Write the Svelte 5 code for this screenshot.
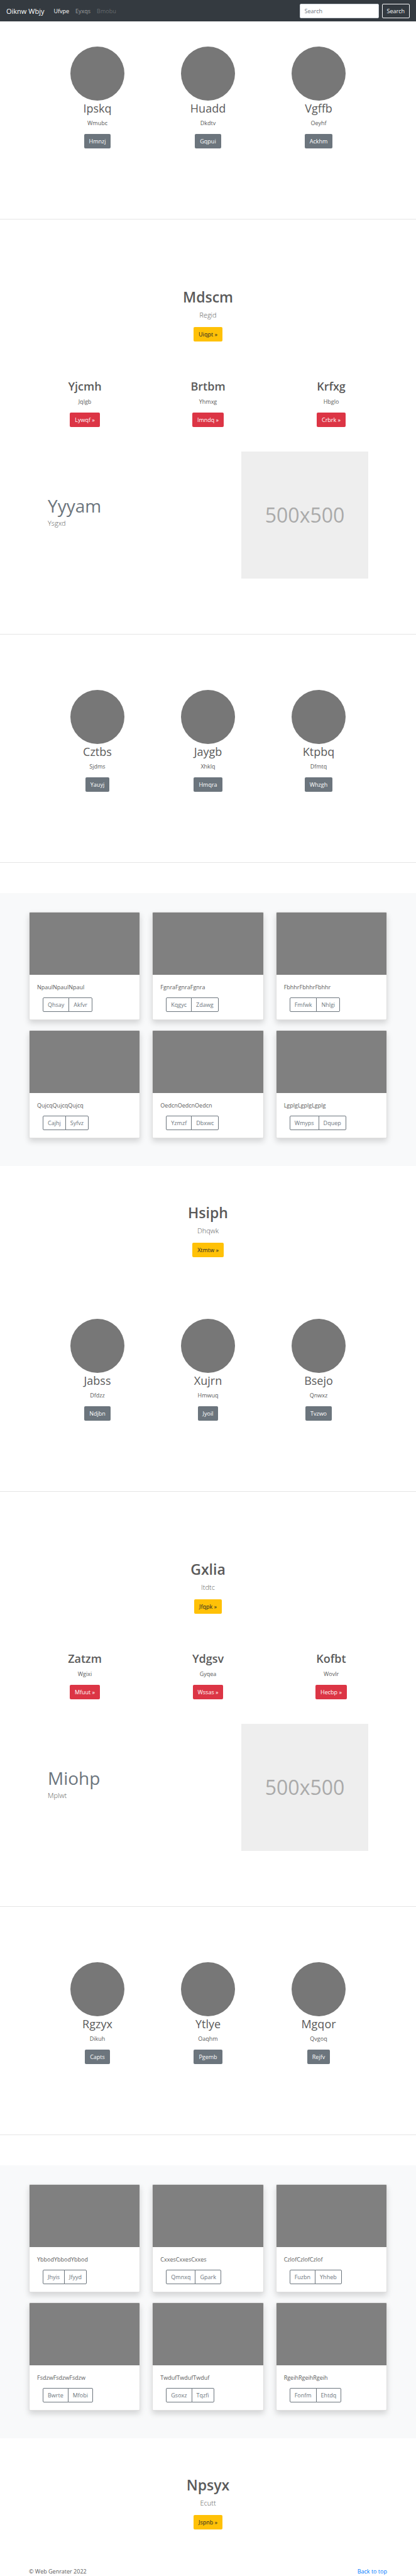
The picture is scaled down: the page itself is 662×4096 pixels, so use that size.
<script>
  const people = [
    [['Ipskq', 'Wmubc', 'Hmnzj'], ['Huadd', 'Dkdtv', 'Gqpui'], ['Vgffb', 'Oeyhf', 'Ackhm']],
    [['Cztbs', 'Sjdms', 'Yauyj'], ['Jaygb', 'Xhklq', 'Hmqra'], ['Ktpbq', 'Dfmtq', 'Whzgh']],
    [['Jabss', 'Dfdzz', 'Ndjbn'], ['Xujrn', 'Hmwuq', 'Jyoil'], ['Bsejo', 'Qnwxz', 'Tvzwo']],
    [['Rgzyx', 'Dikuh', 'Capts'], ['Ytlye', 'Oaqhm', 'Pgemb'], ['Mgqor', 'Qvgoq', 'Rejfv']]
  ];
  const topics = [
    [['Yjcmh', 'Jqlgb', 'Lywqf'], ['Brtbm', 'Yhmxg', 'Imndq'], ['Krfxg', 'Hbglo', 'Crbrk']],
    [['Zatzm', 'Wgixi', 'Mfuut'], ['Ydgsv', 'Gyqea', 'Wssas'], ['Kofbt', 'Wovlr', 'Hecbp']]
  ];
  const albums = [
    [
      ['NpaulNpaulNpaul', 'Qhsay', 'Akfvr'], ['FgnraFgnraFgnra', 'Kqgyc', 'Zdawg'], ['FbhhrFbhhrFbhhr', 'Fmfwk', 'Nhlgi'],
      ['QujcqQujcqQujcq', 'Cajhj', 'Syfvz'], ['OedcnOedcnOedcn', 'Yzmzf', 'Dbxwc'], ['LgplgLgplgLgplg', 'Wmyps', 'Dquep']
    ],
    [
      ['YbbodYbbodYbbod', 'Jhyis', 'Jfyyd'], ['CxxesCxxesCxxes', 'Qmnxq', 'Gpark'], ['CzlofCzlofCzlof', 'Fuzbn', 'Yhheb'],
      ['FsdzwFsdzwFsdzw', 'Bwrte', 'Mfobi'], ['TwdufTwdufTwduf', 'Gsoxz', 'Tqzfi'], ['RgeihRgeihRgeih', 'Fonfm', 'Ehtdq']
    ]
  ];
</script>

{#snippet profiles(items)}
  <section class="profiles">
    {#each items as [name, note, action]}
      <article>
        <svg class="avatar" viewBox="0 0 86 86" aria-hidden="true"><circle cx="43" cy="43" r="43" fill="#777" /></svg>
        <h2>{name}</h2>
        <p>{note}</p>
        <a class="btn secondary" href="#top">{action}</a>
      </article>
    {/each}
  </section>
{/snippet}

{#snippet hero(title, lead, action)}
  <section class="hero">
    <h1>{title}</h1>
    <p class="lead">{lead}</p>
    <a class="btn warning" href="#top">{action} »</a>
  </section>
{/snippet}

{#snippet columns(items)}
  <section class="columns">
    {#each items as [title, note, action]}
      <article>
        <h2>{title}</h2>
        <p>{note}</p>
        <a class="btn danger" href="#top">{action} »</a>
      </article>
    {/each}
  </section>
{/snippet}

{#snippet featurette(title, lead)}
  <section class="featurette">
    <div class="copy">
      <h2>{title}</h2>
      <p class="lead">{lead}</p>
    </div>
    <div class="placeholder">500x500</div>
  </section>
{/snippet}

{#snippet album(items)}
  <section class="album">
    {#each items as [text, first, second]}
      <article class="card">
        <div class="thumb"></div>
        <div class="body">
          <p>{text}</p>
          <div class="group">
            <button type="button">{first}</button>
            <button type="button">{second}</button>
          </div>
        </div>
      </article>
    {/each}
  </section>
{/snippet}

<div class="page" id="top">
  <header>
    <a class="brand" href="#top">Oiknw Wbjy</a>
    <nav>
      <a class="active" href="#top">Ufvpe</a>
      <a href="#top">Eyxqs</a>
      <a class="disabled" href="#top" aria-disabled="true">Bmobu</a>
    </nav>
    <form onsubmit={(e) => e.preventDefault()}>
      <input type="search" placeholder="Search" aria-label="Search" />
      <button type="submit">Search</button>
    </form>
  </header>

  <main>
    <div class="after-nav">{@render profiles(people[0])}</div>
    <hr />
    <div class="after-rule">{@render hero('Mdscm', 'Regid', 'Uiqpt')}</div>
    {@render columns(topics[0])}
    {@render featurette('Yyyam', 'Ysgxd')}
    <hr />
    <div class="spaced">{@render profiles(people[1])}</div>
    <hr />
    {@render album(albums[0])}
    <div class="after-album">{@render hero('Hsiph', 'Dhqwk', 'Xtmtw')}</div>
    <div class="after-hero">{@render profiles(people[2])}</div>
    <hr />
    <div class="after-rule">{@render hero('Gxlia', 'Itdtc', 'Jfqpk')}</div>
    {@render columns(topics[1])}
    {@render featurette('Miohp', 'Mplwt')}
    <hr />
    <div class="spaced">{@render profiles(people[3])}</div>
    <hr />
    {@render album(albums[1])}
    <div class="after-album">{@render hero('Npsyx', 'Ecutt', 'Jspnb')}</div>
  </main>

  <footer>
    <span>© Web Genrater 2022</span>
    <a href="#top">Back to top</a>
  </footer>
</div>

<style>
  :global(body) {
    margin: 0;
    background: #fff;
  }
  .page {
    font: 400 9px/15px 'Open Sans', 'Noto Sans', sans-serif;
    color: #5a5a5a;
  }
  .page * {
    box-sizing: border-box;
  }
  h1,
  h2,
  p {
    margin: 0;
  }
  a {
    text-decoration: none;
  }
  input,
  button {
    font: inherit;
  }

  header {
    display: flex;
    align-items: center;
    height: 34px;
    padding: 0 10px;
    background: #343a40;
  }
  .brand {
    margin-right: 15px;
    font-size: 11px;
    color: #fff;
  }
  nav {
    display: flex;
    flex: 1;
    gap: 10px;
  }
  nav a {
    color: rgba(255, 255, 255, 0.5);
  }
  nav .active {
    color: #fff;
  }
  nav .disabled {
    color: rgba(255, 255, 255, 0.25);
  }
  form {
    display: flex;
    gap: 5px;
  }
  input {
    width: 126px;
    height: 23px;
    padding: 3px 7px;
    border: 1px solid #ced4da;
    border-radius: 2px;
    background: #fff;
    color: #495057;
    appearance: none;
  }
  input::placeholder {
    color: #6c757d;
    opacity: 1;
  }
  form button {
    height: 23px;
    padding: 3px 7px;
    border: 1px solid #f8f9fa;
    border-radius: 2px;
    background: transparent;
    color: #f8f9fa;
  }

  hr {
    height: 1px;
    margin: 0;
    border: 0;
    background: #e5e5e5;
  }
  .btn {
    display: inline-block;
    padding: 4px 8px;
    border-radius: 2px;
    vertical-align: top;
  }
  .secondary {
    background: #6c757d;
    color: #fff;
  }
  .warning {
    background: #ffc107;
    color: #212529;
  }
  .danger {
    background: #dc3545;
    color: #fff;
  }
  .lead {
    font-size: 11px;
    font-weight: 300;
    line-height: 18px;
  }

  .after-nav {
    padding-top: 40px;
  }
  .after-rule {
    padding-top: 109px;
  }
  .spaced {
    padding-top: 88px;
  }
  .after-album {
    padding-top: 60px;
  }
  .after-hero {
    padding-top: 98px;
  }

  .profiles {
    display: grid;
    grid-template-columns: repeat(3, 1fr);
    padding: 0 67px 112px;
    text-align: center;
  }
  .avatar {
    display: block;
    width: 86px;
    height: 86px;
    margin: 0 auto;
  }
  .profiles h2 {
    margin-bottom: 4px;
    font-size: 18px;
    font-weight: 400;
    line-height: 24px;
  }
  .profiles p,
  .columns p,
  .hero p {
    margin-bottom: 10px;
  }

  .hero {
    text-align: center;
  }
  .hero h1 {
    margin-bottom: 5px;
    font-size: 23px;
    font-weight: 600;
    line-height: 29px;
  }
  .columns {
    display: grid;
    grid-template-columns: repeat(3, 1fr);
    padding: 59px 37px 39px;
    text-align: center;
  }
  .columns h2 {
    margin-bottom: 5px;
    font-size: 18px;
    font-weight: 600;
    line-height: 24px;
  }

  .featurette {
    display: flex;
    align-items: center;
    justify-content: space-between;
    padding: 0 76px 88px;
  }
  .copy {
    padding-bottom: 12px;
  }
  .copy h2 {
    color: #6c757d;
    font-size: 28px;
    font-weight: 400;
    line-height: 38px;
  }
  .placeholder {
    display: grid;
    place-items: center;
    width: 202px;
    aspect-ratio: 1;
    background: #eee;
    color: #aaa;
    font-size: 32px;
    line-height: 38px;
  }

  .album {
    display: grid;
    grid-template-columns: repeat(3, 1fr);
    gap: 16px 19px;
    margin-top: 48px;
    padding: 30px 46px 44px;
    background: #f8f9fa;
  }
  .card {
    overflow: hidden;
    border: 1px solid #dfdfdf;
    border-radius: 2px;
    background: #fff;
    box-shadow: 0 5px 10px rgba(0, 0, 0, 0.15);
  }
  .thumb {
    height: 99px;
    background: #808080;
  }
  .body {
    padding: 12px;
  }
  .body p {
    margin-bottom: 9px;
  }
  .group {
    display: flex;
    margin-left: 9px;
  }
  .group button {
    height: 23px;
    padding: 3px 7px;
    border: 1px solid #6c757d;
    background: #fff;
    color: #6c757d;
  }
  .group button:first-child {
    border-radius: 2px 0 0 2px;
  }
  .group button:last-child {
    margin-left: -1px;
    border-radius: 0 2px 2px 0;
  }

  footer {
    display: flex;
    justify-content: space-between;
    padding: 59px 46px 0;
  }
  footer a {
    color: #007bff;
  }
</style>
